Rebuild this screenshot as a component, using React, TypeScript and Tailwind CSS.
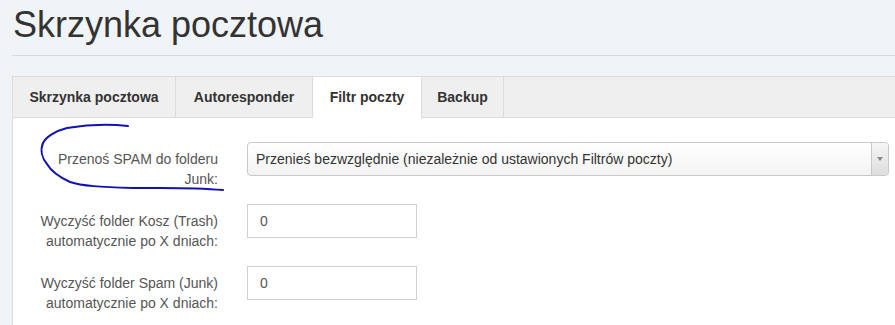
const tabs = [
  { label: "Skrzynka pocztowa", width: "w-[163px]" },
  { label: "Autoresponder", width: "w-[137px]" },
  { label: "Filtr poczty", width: "w-[109px]", active: true },
  { label: "Backup", width: "w-[82px]" },
];

function Annotation() {
  return (
    <svg
      className="pointer-events-none absolute left-0 top-0"
      width="240"
      height="200"
      viewBox="0 0 240 200"
    >
      <path
        d="M128 126 C110 124 85 125 67 128 C55 131 46 137 43 143 C40 150 42 158 47 164 C51 171 57 176 70 182 C82 186 100 187 133 188 C160 188 190 187 223 190"
        fill="none"
        stroke="#1212b4"
        strokeWidth="2"
        strokeLinecap="round"
      />
    </svg>
  );
}

function Row({ label, children }: { label: React.ReactNode; children: React.ReactNode }) {
  return (
    <div className="flex mb-[15px]">
      <div className="w-[205px] shrink-0 pt-[7px] text-right leading-5 text-[14px] text-[#555]">
        {label}
      </div>
      <div className="ml-[29px] flex-1">{children}</div>
    </div>
  );
}

export default function App() {
  return (
    <div
      className="relative flex h-[325px] w-[895px] flex-col overflow-hidden bg-[#f1f4f7] pl-[12px]"
      style={{ fontFamily: '"Liberation Sans", Arial, sans-serif' }}
    >
      <h1 className="border-b border-[#d5d9dd] pb-[10px] pl-[1px] pt-[5px] text-[36px] leading-[40px] font-normal text-[#333]">
        Skrzynka pocztowa
      </h1>
      <div className="mt-[20px] flex-1 border-l border-t border-[#dcdcdc] bg-white">
        <div className="flex border-b border-[#dcdcdc] bg-[#efefef]">
          {tabs.map((t) => (
            <div
              key={t.label}
              className={
                t.active
                  ? `${t.width} -mb-px border-r border-[#dcdcdc] bg-white pb-[11px] pt-[10px] text-center text-[14px] font-bold leading-5 text-[#333]`
                  : `${t.width} border-r border-[#dcdcdc] py-[10px] text-center text-[14px] font-bold leading-5 text-[#333]`
              }
            >
              {t.label}
            </div>
          ))}
        </div>
        <div className="pr-[6px] pt-[24px]">
          <Row
            label={
              <>
                Przenoś SPAM do folderu
                <br />
                Junk:
              </>
            }
          >
            <div className="flex h-[34px] items-stretch rounded-[4px] border border-[#c9c9c9] bg-gradient-to-b from-white to-[#f3f3f3]">
              <div className="flex-1 pl-[8px] text-[14px] leading-[32px] text-[#333]">
                Przenieś bezwzględnie (niezależnie od ustawionych Filtrów poczty)
              </div>
              <div className="flex w-[17px] items-center justify-center rounded-r-[4px] border-l border-[#c9c9c9] bg-gradient-to-b from-[#f6f6f6] to-[#dedede]">
                <div className="h-0 w-0 border-x-[3px] border-t-[4px] border-x-transparent border-t-[#888]" />
              </div>
            </div>
          </Row>
          <Row
            label={
              <>
                Wyczyść folder Kosz (Trash)
                <br />
                automatycznie po X dniach:
              </>
            }
          >
            <div className="h-[34px] w-[170px] border border-[#cfcfcf] pl-[12px] text-[14px] leading-[32px] text-[#555]">
              0
            </div>
          </Row>
          <Row
            label={
              <>
                Wyczyść folder Spam (Junk)
                <br />
                automatycznie po X dniach:
              </>
            }
          >
            <div className="h-[34px] w-[170px] border border-[#cfcfcf] pl-[12px] text-[14px] leading-[32px] text-[#555]">
              0
            </div>
          </Row>
        </div>
      </div>
      <Annotation />
    </div>
  );
}
